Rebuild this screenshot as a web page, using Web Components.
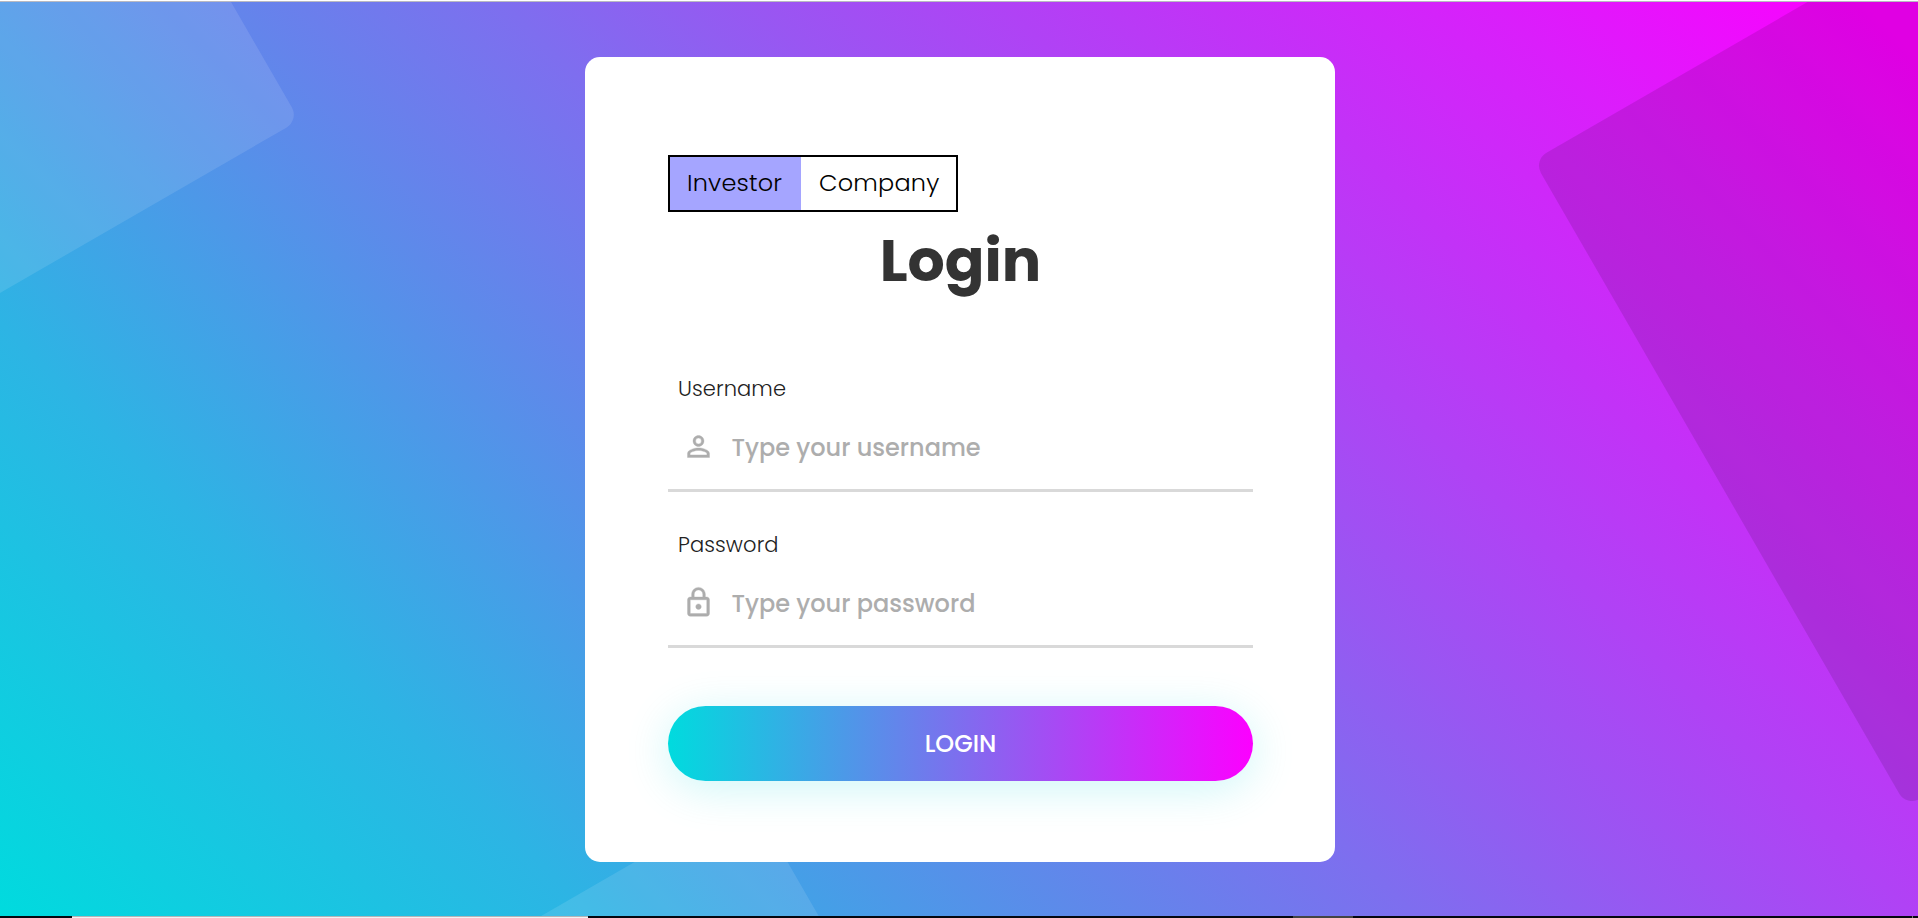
<!DOCTYPE html>
<html lang="en">
<head>
<meta charset="utf-8">
<title>Login</title>
<style>
    html, body {
        margin: 0;
        height: 100%;
        overflow: hidden;
    }

    body {
        font-family: Poppins, Inter, "Open Sans", sans-serif;
        color: #333;
    }
</style>
</head>
<body>

<login-page>
    <login-card>
        <role-toggle slot="toggle"></role-toggle>
        <span slot="title">Login</span>
        <login-field label="Username" placeholder="Type your username" icon="user"></login-field>
        <login-field label="Password" placeholder="Type your password" icon="lock"></login-field>
        <gradient-button slot="action">LOGIN</gradient-button>
    </login-card>
</login-page>

<script>
class LoginPage extends HTMLElement {
    constructor() {
        super();
        this.attachShadow({ mode: 'open' }).innerHTML = `
<style>
    :host {
        display: flex;
        flex-direction: column;
        position: relative;
        height: 918px;
        overflow: hidden;
        background: linear-gradient(45deg,
            #00dbde 0%,
            rgb(45, 180, 228) 21%,
            rgb(93, 138, 234) 38%,
            rgb(126, 110, 239) 50%,
            rgb(153, 86, 242) 59%,
            rgb(176, 66, 245) 67.6%,
            rgb(194, 50, 247) 75%,
            rgb(218, 30, 251) 85%,
            #fc00ff 98%);
    }

    .shapes {
        position: absolute;
        inset: 0;
    }

    .top {
        height: 1px;
        background: #fff;
        border-bottom: 1px solid #b9b9c0;
        z-index: 1;
    }

    main {
        flex: 1;
        display: flex;
        justify-content: center;
        align-items: flex-start;
        padding: 55px 0 0 2px;
        box-sizing: border-box;
        z-index: 1;
    }

    .bottom {
        display: flex;
        height: 2px;
        background: #05070f;
        z-index: 1;
    }

    .bottom .dark { width: 72px; }
    .bottom .light { width: 516px; height: 1px; background: #f2f2f2; border-top: 1px solid #b4b4b8; }
    .bottom .grey { width: 60px; margin-left: 705px; background: #444; }
    .bottom .tick { width: 1px; margin-left: 559px; background: #777; }
</style>

<svg class="shapes" width="1918" height="918" viewBox="0 0 1918 918">
    <rect x="-700" y="-600" width="700" height="600" rx="15" fill="#fff" fill-opacity=".11" transform="translate(299.3 120.2) rotate(-30)"/>
    <rect width="800" height="746.3" rx="15" fill="#000" fill-opacity=".11" transform="translate(1533.5 160.2) rotate(-30)"/>
    <rect x="-500" width="500" height="500" rx="15" fill="#fff" fill-opacity=".11" transform="translate(749.3 795.8) rotate(-30)"/>
</svg>
<div class="top"></div>
<main><slot></slot></main>
<div class="bottom"><i class="dark"></i><i class="light"></i><i class="grey"></i><i class="tick"></i></div>
`;
    }
}

class LoginCard extends HTMLElement {
    constructor() {
        super();
        this.attachShadow({ mode: 'open' }).innerHTML = `
<style>
    :host {
        display: flex;
        flex-direction: column;
        width: 750px;
        height: 805px;
        padding: 98px 82px 0 83px;
        box-sizing: border-box;
        background: #fff;
        border-radius: 15px;
    }

    h1 {
        margin: 14px 0 0;
        height: 70px;
        font-size: 58.5px;
        line-height: 70px;
        font-weight: 700;
        text-align: center;
        color: #333;
    }

    .fields {
        display: flex;
        flex-direction: column;
        gap: 30px;
        margin-top: 70px;
    }

    .action {
        margin-top: 58px;
    }
</style>

<slot name="toggle"></slot>
<h1><slot name="title"></slot></h1>
<div class="fields"><slot></slot></div>
<div class="action"><slot name="action"></slot></div>
`;
    }
}

class RoleToggle extends HTMLElement {
    constructor() {
        super();
        this.attachShadow({ mode: 'open' }).innerHTML = `
<style>
    :host {
        display: flex;
        align-self: flex-start;
        width: 290px;
        height: 57px;
        box-sizing: border-box;
        border: 2px solid #000;
        font-size: 24px;
        font-weight: 300;
        letter-spacing: 0.2px;
        line-height: 51px;
        color: #000;
    }

    span {
        padding-left: 18px;
        flex: 1;
    }

    .active {
        flex: none;
        width: 114px;
        padding-left: 17px;
        background: #a5a5ff;
    }
</style>

<span class="active">Investor</span>
<span>Company</span>
`;
    }
}

const ICONS = {
    user: '<path d="M12 5.9a2.1 2.1 0 1 1 0 4.2 2.1 2.1 0 0 1 0-4.2m0 9c2.970 0 6.100 1.460 6.100 2.100v1.100H5.900V17c0-.64 3.130-2.100 6.100-2.100M12 4C9.790 4 8 5.790 8 8s1.790 4 4 4 4-1.790 4-4-1.790-4-4-4zm0 9c-2.670 0-8 1.340-8 4v3h16v-3c0-2.660-5.330-4-8-4z"/>',
    lock: '<path d="M12 17c1.100 0 2-.9 2-2s-.9-2-2-2-2 .9-2 2 .9 2 2 2zm6-9h-1V6c0-2.760-2.240-5-5-5S7 3.240 7 6v2H6c-1.100 0-2 .9-2 2v10c0 1.100.9 2 2 2h12c1.100 0 2-.9 2-2V10c0-1.100-.9-2-2-2zM8.900 6c0-1.710 1.390-3.100 3.100-3.100s3.100 1.390 3.100 3.100v2H8.900V6zM18 20H6V10h12v10z"/>'
};

class LoginField extends HTMLElement {
    connectedCallback() {
        this.attachShadow({ mode: 'open' }).innerHTML = `
<style>
    :host {
        display: block;
        height: 126px;
        border-bottom: 3px solid #d9d9d9;
        box-sizing: border-box;
    }

    label {
        display: block;
        padding: 7px 0 0 10px;
        font-size: 21px;
        font-weight: 300;
        letter-spacing: 0.1px;
        line-height: 32px;
        color: #222;
    }

    .row {
        display: flex;
        align-items: center;
        height: 85px;
        padding-left: 13.5px;
        gap: 17px;
        color: #adadad;
        font-size: 24px;
        font-weight: 500;
    }

    svg {
        display: block;
        margin-bottom: 2px;
        fill: currentColor;
        stroke: currentColor;
        stroke-width: 0.25;
    }
</style>

<label>${this.getAttribute('label')}</label>
<div class="row">
    <svg width="33" height="33" viewBox="0 0 24 24">${ICONS[this.getAttribute('icon')]}</svg>
    <span>${this.getAttribute('placeholder')}</span>
</div>
`;
    }
}

class GradientButton extends HTMLElement {
    constructor() {
        super();
        this.attachShadow({ mode: 'open' }).innerHTML = `
<style>
    :host {
        display: flex;
        align-items: center;
        justify-content: center;
        height: 75px;
        border-radius: 37.5px;
        background: linear-gradient(to right, #00dbde, #fc00ff);
        box-shadow: 0 7.5px 45px 0 rgba(3, 216, 222, 0.2);
        color: #fff;
        font-size: 24px;
        font-weight: 500;
    }
</style>

<slot></slot>
`;
    }
}

customElements.define('login-page', LoginPage);
customElements.define('login-card', LoginCard);
customElements.define('role-toggle', RoleToggle);
customElements.define('login-field', LoginField);
customElements.define('gradient-button', GradientButton);
</script>
</body>
</html>
